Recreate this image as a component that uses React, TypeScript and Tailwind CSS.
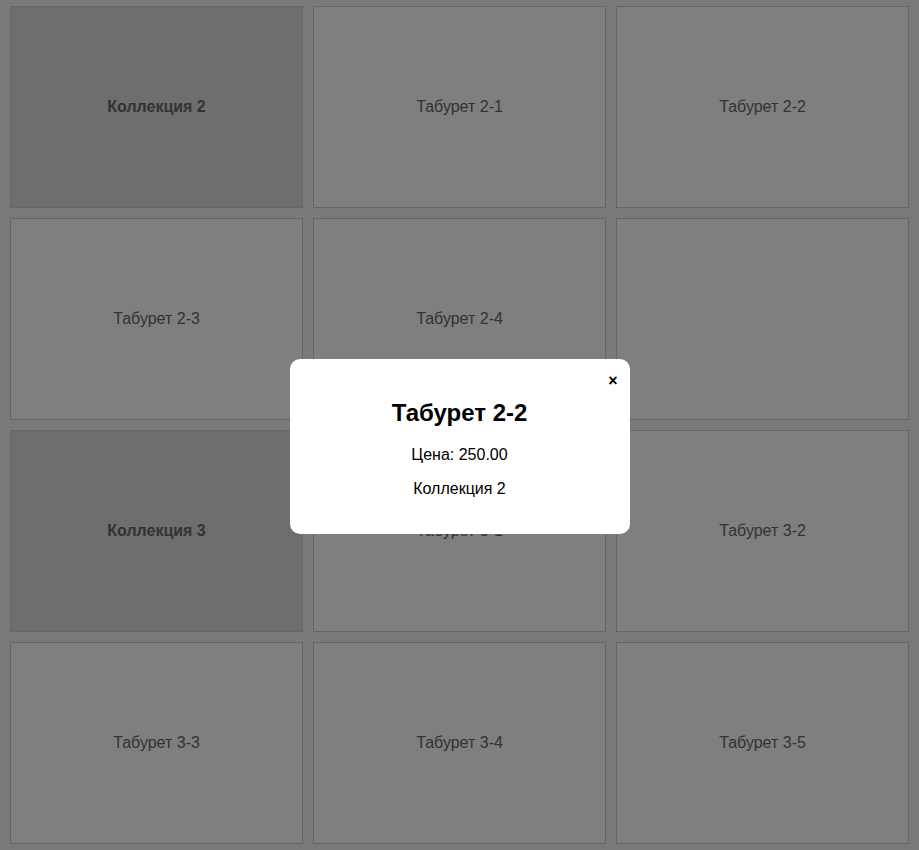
import { useState } from "react";

type Item = { title: string; collection?: boolean };

const items: Item[] = [
  { title: "Коллекция 2", collection: true },
  { title: "Табурет 2-1" },
  { title: "Табурет 2-2" },
  { title: "Табурет 2-3" },
  { title: "Табурет 2-4" },
  { title: "" },
  { title: "Коллекция 3", collection: true },
  { title: "Табурет 3-1" },
  { title: "Табурет 3-2" },
  { title: "Табурет 3-3" },
  { title: "Табурет 3-4" },
  { title: "Табурет 3-5" },
];

function App() {
  const [open, setOpen] = useState(true);

  return (
    <div className="min-h-[850px] bg-[#f4f4f4] font-['Liberation_Sans',Arial,sans-serif]">
      <div className="grid grid-cols-3 gap-[10px] px-[10px] pt-[6px]">
        {items.map((item, i) => (
          <div
            key={i}
            className={
              item.collection
                ? "flex h-[202px] items-center justify-center border border-[#cccccc] bg-[#dcdcdc] text-base font-bold text-[#666666]"
                : "flex h-[202px] items-center justify-center border border-[#cccccc] bg-white text-base text-[#666666]"
            }
          >
            {item.title}
          </div>
        ))}
      </div>

      {open && (
        <div className="fixed inset-0 flex items-center justify-center bg-black/50">
          <div className="relative mt-[42px] w-[340px] rounded-[10px] bg-white p-5 text-center text-black">
            <button
              onClick={() => setOpen(false)}
              className="absolute right-[12px] top-[14px] text-[16px] font-bold leading-none"
            >
              ×
            </button>
            <h2 className="mt-5 mb-[19px] text-2xl leading-[28px] font-bold">Табурет 2-2</h2>
            <p className="my-4 text-base leading-[18px]">Цена: 250.00</p>
            <p className="mt-4 mb-4 text-base leading-[18px]">Коллекция 2</p>
          </div>
        </div>
      )}
    </div>
  );
}

export default App;
